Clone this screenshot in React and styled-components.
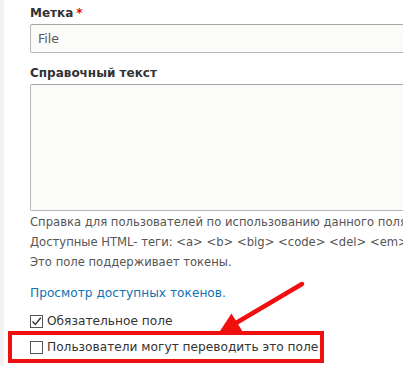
import React from 'react';
import styled, { createGlobalStyle } from 'styled-components';

const GlobalStyle = createGlobalStyle`
  html, body {
    margin: 0;
    padding: 0;
    background: #fff;
    overflow: hidden;
  }
  body {
    font-family: "DejaVu Sans", "Noto Sans", sans-serif;
    color: #333;
  }
`;

const Page = styled.div`
  position: relative;
  display: flex;
  width: 403px;
  height: 366px;
  overflow: hidden;
`;

const Gutter = styled.div`
  flex: 0 0 4px;
  background: #f2f2f2;
`;

const Content = styled.div`
  flex: 0 0 auto;
  display: flex;
  flex-direction: column;
  padding: 5px 0 0 26px;
`;

const Label = styled.label`
  display: block;
  font-size: 12px;
  font-weight: bold;
  line-height: 17px;
  color: #333;
  margin-bottom: 2px;
`;

const Required = styled.span`
  color: #e00;
  margin-left: 3px;
`;

const TextInput = styled.div`
  box-sizing: border-box;
  width: 440px;
  height: ${({ $height }) => $height}px;
  border: 1px solid #b8b8b8;
  border-top-color: #a6a6a6;
  border-radius: 2px;
  background: #fbfbfa;
  padding: 5px 7px;
  font-size: 12.5px;
  line-height: 17px;
  color: #595959;
  margin-bottom: ${({ $gap }) => $gap}px;
`;

const Help = styled.div`
  margin-top: 1px;
  font-size: 11.6px;
  line-height: 20px;
  color: #555;
  white-space: nowrap;
`;

const TokenLink = styled.a`
  margin-top: 12px;
  font-size: 12.2px;
  line-height: 18px;
  color: #0f72b3;
  text-decoration: none;
`;

const CheckRow = styled.div`
  display: flex;
  align-items: center;
  gap: 4px;
  font-size: 12.2px;
  line-height: 18px;
  color: #333;
  white-space: nowrap;
  margin-top: ${({ $top }) => $top}px;
`;

const Highlight = styled.div`
  display: inline-flex;
  align-self: flex-start;
  margin: 1px 0 0 -22px;
  padding: 3px 2px 3px 18px;
  border: 4px solid #f01010;
`;

const Box = styled.span`
  box-sizing: border-box;
  width: 13px;
  height: 13px;
  border: 1px solid #555;
  background: #fff;
  display: inline-flex;
  align-items: center;
  justify-content: center;
`;

const Arrow = styled.svg`
  position: absolute;
  left: 0;
  top: 0;
  pointer-events: none;
`;

const Checkbox = ({ checked }) => (
  <Box>
    {checked && (
      <svg width="11" height="11" viewBox="0 0 11 11">
        <path d="M1.5 5.5 L4.3 8.5 L9.8 1.8" fill="none" stroke="#333" strokeWidth="1.4" />
      </svg>
    )}
  </Box>
);

const App = () => (
  <>
    <GlobalStyle />
    <Page>
      <Gutter />
      <Content>
        <Label>
          Метка<Required>*</Required>
        </Label>
        <TextInput $height={29} $gap={12}>File</TextInput>
        <Label>Справочный текст</Label>
        <TextInput $height={127} $gap={0} />
        <Help>
          <div>Справка для пользователей по использованию данного поля</div>
          <div>Доступные HTML- теги: &lt;a&gt; &lt;b&gt; &lt;big&gt; &lt;code&gt; &lt;del&gt; &lt;em&gt;</div>
          <div>Это поле поддерживает токены.</div>
        </Help>
        <TokenLink href="#">Просмотр доступных токенов.</TokenLink>
        <CheckRow $top={10}>
          <Checkbox checked />
          Обязательное поле
        </CheckRow>
        <Highlight>
          <CheckRow $top={0}>
            <Checkbox />
            Пользователи могут переводить это поле
          </CheckRow>
        </Highlight>
      </Content>
      <Arrow width="403" height="366" viewBox="0 0 403 366">
        <line x1="302" y1="284" x2="236" y2="323" stroke="#f01010" strokeWidth="4.5" strokeLinecap="round" />
        <polygon points="218,334 231.5,313.5 242.5,331.5" fill="#f01010" />
      </Arrow>
    </Page>
  </>
);

export default App;
